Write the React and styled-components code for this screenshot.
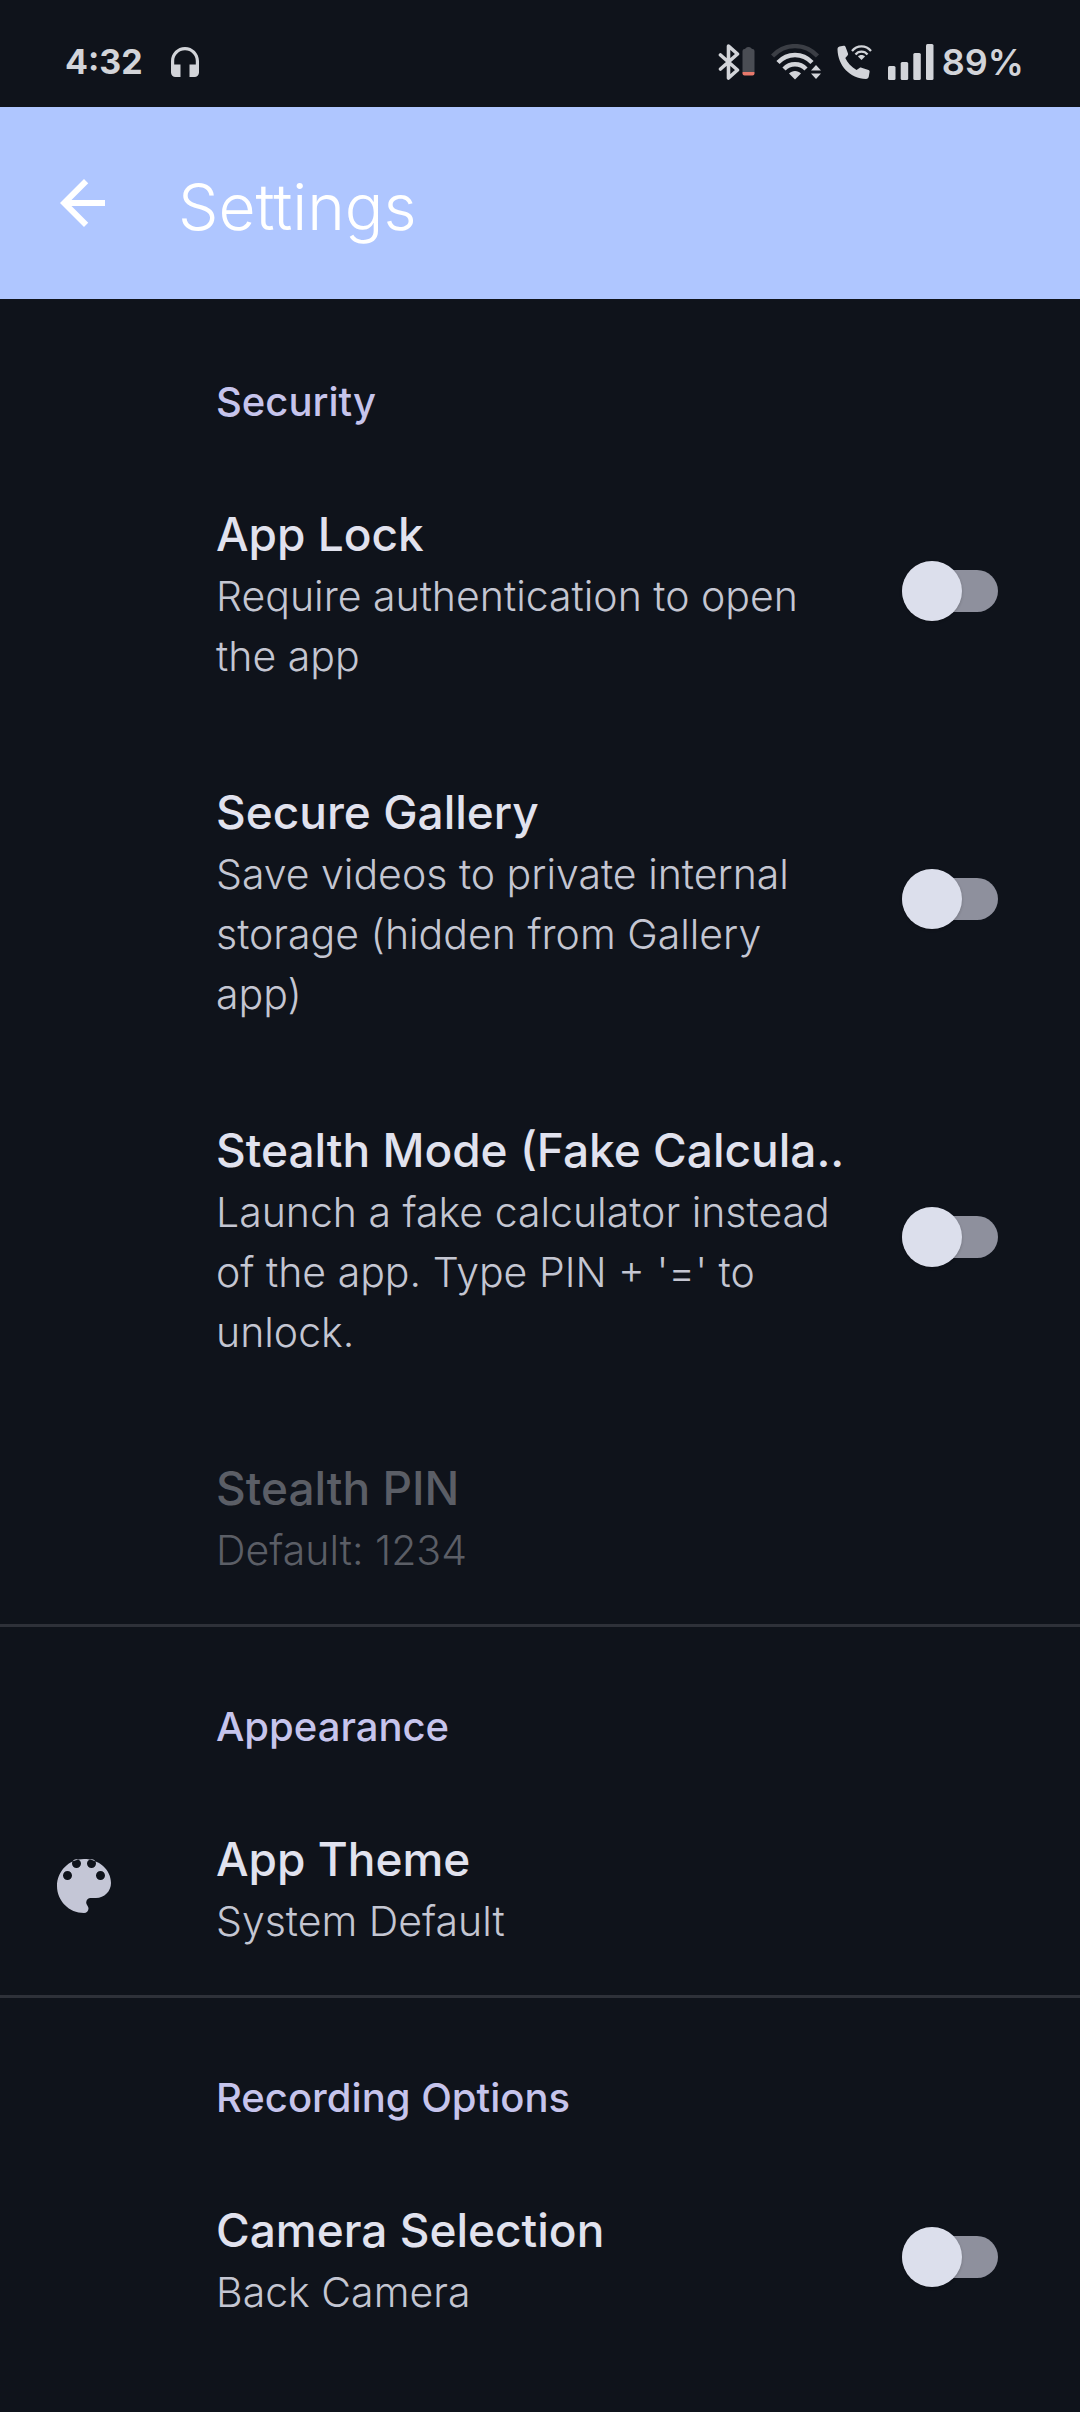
import React, { useState } from "react";
import styled, { createGlobalStyle } from "styled-components";

const GlobalStyle = createGlobalStyle`
  * { box-sizing: border-box; }
  body {
    margin: 0;
    background: #0f131b;
    font-family: Inter, Roboto, "Liberation Sans", sans-serif;
  }
`;

const Screen = styled.div`
  min-height: 100vh;
  background: #0f131b;
  color: #e1e2ee;
`;

const StatusBar = styled.div`
  display: flex;
  align-items: center;
  justify-content: space-between;
  height: 107px;
  padding: 16px 56px 0 65px;
  color: #d2d4d9;
`;

const StatusGroup = styled.div`
  display: flex;
  align-items: center;
  gap: ${(p) => p.$gap}px;
`;

const StatusText = styled.span`
  font-size: ${(p) => p.$size}px;
  line-height: 44px;
  font-weight: ${(p) => p.$weight};
`;

const StatusIcon = styled.svg`
  display: block;
  flex: none;
  fill: currentColor;
`;

const AppBar = styled.header`
  display: flex;
  align-items: center;
  gap: 58px;
  height: 192px;
  padding: 0 48px;
  background: #afc6ff;
  color: #ffffff;
`;

const BackButton = styled.button`
  display: flex;
  padding: 0;
  border: 0;
  background: none;
  color: inherit;
  cursor: pointer;
`;

const AppTitle = styled.h1`
  margin: 0;
  padding-top: 8px;
  font-size: 64px;
  line-height: 80px;
  font-weight: 350;
`;

const Category = styled.section`
  border-top: 3px solid ${(p) => (p.$divided ? "#2e3139" : "transparent")};
`;

const CategoryTitle = styled.h2`
  margin: 0;
  padding: 70px 48px 20px 216px;
  font-size: 40px;
  line-height: 60px;
  font-weight: 450;
  color: #c6c4ec;
`;

const Row = styled.div`
  display: grid;
  grid-template-columns: 168px 1fr auto;
  align-items: center;
  padding: 44px 82px 44px 48px;
  color: ${(p) => (p.$disabled ? "#5b5e66" : "#e1e2ee")};
`;

const IconSlot = styled.div`
  display: flex;
  color: #c4c6d6;
`;

const RowText = styled.div`
  min-width: 0;
  padding: 8px 48px 0 0;
`;

const RowTitle = styled.label`
  display: block;
  margin-bottom: 2px;
  font-size: 46px;
  line-height: 60px;
  font-weight: 500;
  white-space: nowrap;
  overflow: hidden;
`;

const Summary = styled.p`
  margin: 0;
  font-size: 41px;
  line-height: 60px;
  font-weight: 300;
  color: ${(p) => (p.$disabled ? "#5b5e66" : "#c4c6d2")};
`;

const Switch = styled.input`
  appearance: none;
  display: flex;
  align-items: center;
  justify-content: ${(p) => (p.checked ? "flex-end" : "flex-start")};
  width: 96px;
  height: 42px;
  margin: 0;
  border-radius: 21px;
  background: #8e909d;
  cursor: pointer;

  &::before {
    content: "";
    flex: none;
    width: 60px;
    height: 60px;
    border-radius: 50%;
    background: #dcdfec;
    box-shadow: 0 1px 3px rgba(0, 0, 0, 0.2);
  }
`;

const HeadphonesIcon = () => (
  <StatusIcon width="28" height="30" viewBox="0 0 28 30" aria-hidden="true">
    <path d="M14 0C6.300 0 0 6.300 0 14v11.500C0 28 2 30 4.500 30H9.500V17.500H3.200V14C3.200 8 8 3.200 14 3.200S24.800 8 24.800 14v3.500H18.500V30h5c2.500 0 4.500-2 4.500-4.500V14C28 6.300 21.700 0 14 0z" />
  </StatusIcon>
);

const BluetoothIcon = () => (
  <StatusIcon width="37" height="36" viewBox="0 0 37 36" aria-hidden="true">
    <path d="M2.500 11 19.500 26 10.500 34V2L19.500 10 2.500 25" fill="none" stroke="currentColor" strokeWidth="3.600" strokeLinejoin="round" strokeLinecap="round" />
    <path d="M24.500 7a2 2 0 0 1 2-2c1 0 1.500-2 4-2S33.500 5 34.500 5a2 2 0 0 1 2 2V28H24.500z" fill="#4a4d54" />
    <path d="M24.500 28h12v1.500a2 2 0 0 1-2 2h-8a2 2 0 0 1-2-2z" fill="#e8796c" />
  </StatusIcon>
);

const WifiIcon = () => (
  <StatusIcon width="50" height="36" viewBox="0 0 50 36" aria-hidden="true">
    <g fill="none" strokeWidth="4.400">
      <path d="M1.500 12C14-1.200 34-1.200 46.500 12" stroke="#3b3e45" />
      <path d="M7 18.500C16.500 8.500 31.500 8.500 41 18.500" stroke="currentColor" />
      <path d="M13 25C19 18.700 29 18.700 35 25" stroke="currentColor" />
    </g>
    <path d="M24 35.500 18 29.500C21 26 27 26 30 29.500z" />
    <path d="M45 21 50 26.500H40zM45 35 40 29.500H50z" />
  </StatusIcon>
);

const WifiCallIcon = () => (
  <StatusIcon width="35" height="34" viewBox="0 0 35 34" aria-hidden="true">
    <path d="M2.500 1.500 6.500.7C7.500.5 8.200 1 8.500 1.800L11 8.500C11.300 9.300 11 10 10.500 10.500L8.300 13C10.500 18 14.500 22 19.500 25L22.500 23C23 22.500 23.800 22.400 24.500 22.700L31.500 25C32.300 25.300 32.700 26 32.600 26.800L31.800 31.500C31.500 33 30.500 34 29 34C13 33.500 1 21 .5 4.500C.4 3 1.200 1.800 2.500 1.500z" />
    <g fill="none" stroke="currentColor" strokeWidth="2.200">
      <path d="M15 6C20-.2 29-.2 34 6" />
      <path d="M18.500 9.500C21.500 5.600 27.500 5.600 30.500 9.500" />
    </g>
    <path d="M24.500 15 21 11.500C22.500 9.500 26.500 9.500 28 11.500z" />
  </StatusIcon>
);

const SignalIcon = () => (
  <StatusIcon width="46" height="36" viewBox="0 0 46 36" aria-hidden="true">
    <rect x="0" y="22" width="7.500" height="14" rx="1.500" />
    <rect x="12.700" y="18" width="7.500" height="18" rx="1.500" />
    <rect x="25.300" y="9" width="7.500" height="27" rx="1.500" />
    <rect x="38" y="0" width="7.500" height="36" rx="1.500" />
  </StatusIcon>
);

const ArrowIcon = () => (
  <svg width="72" height="72" viewBox="0 0 24 24" fill="currentColor" aria-hidden="true">
    <path d="M19 11H7.830l5.590-5.590L12 4l-8 8 8 8 1.410-1.410L7.830 13H19z" />
  </svg>
);

const PaletteIcon = () => (
  <svg width="72" height="72" viewBox="0 0 24 24" fill="currentColor" aria-hidden="true">
    <path
      fillRule="evenodd"
      d="M12 3c-4.970 0-9 4.030-9 9s4.030 9 9 9c.83 0 1.500-.67 1.500-1.500 0-.39-.15-.74-.39-1.010-.23-.26-.38-.61-.38-.99 0-.83.67-1.500 1.500-1.500H16c2.760 0 5-2.240 5-5 0-4.420-4.030-8-9-8zm-5.500 7C5.670 10 5 9.330 5 8.500S5.670 7 6.500 7 8 7.670 8 8.500 7.330 10 6.500 10zm3-4C8.670 6 8 5.330 8 4.500S8.670 3.100 9.500 3.100 11 3.670 11 4.500 10.330 6 9.500 6zm5 0C13.670 6 13 5.330 13 4.500s.67-1.400 1.500-1.400S16 3.670 16 4.500 15.330 6 14.500 6zm3 4c-.83 0-1.500-.67-1.500-1.500S16.670 7 17.500 7 19 7.670 19 8.500 18.330 10 17.500 10z"
    />
  </svg>
);

function SwitchRow({ id, title, summary }) {
  const [on, setOn] = useState(false);
  return (
    <Row>
      <IconSlot />
      <RowText>
        <RowTitle htmlFor={id}>{title}</RowTitle>
        <Summary>{summary}</Summary>
      </RowText>
      <Switch id={id} type="checkbox" role="switch" checked={on} onChange={() => setOn(!on)} />
    </Row>
  );
}

function TextRow({ icon, title, summary, disabled }) {
  return (
    <Row $disabled={disabled}>
      <IconSlot>{icon}</IconSlot>
      <RowText>
        <RowTitle as="div">{title}</RowTitle>
        <Summary $disabled={disabled}>{summary}</Summary>
      </RowText>
    </Row>
  );
}

export default function App() {
  return (
    <Screen>
      <GlobalStyle />
      <StatusBar>
        <StatusGroup $gap={28}>
          <StatusText $size={34} $weight={700}>4:32</StatusText>
          <HeadphonesIcon />
        </StatusGroup>
        <StatusGroup $gap={16}>
          <BluetoothIcon />
          <WifiIcon />
          <WifiCallIcon />
          <StatusGroup $gap={8}>
            <SignalIcon />
            <StatusText $size={36} $weight={600}>89%</StatusText>
          </StatusGroup>
        </StatusGroup>
      </StatusBar>
      <AppBar>
        <BackButton type="button" aria-label="Back">
          <ArrowIcon />
        </BackButton>
        <AppTitle>Settings</AppTitle>
      </AppBar>
      <main>
        <Category>
          <CategoryTitle>Security</CategoryTitle>
          <SwitchRow id="app-lock" title="App Lock" summary="Require authentication to open the app" />
          <SwitchRow
            id="secure-gallery"
            title="Secure Gallery"
            summary="Save videos to private internal storage (hidden from Gallery app)"
          />
          <SwitchRow
            id="stealth-mode"
            title="Stealth Mode (Fake Calcula.."
            summary="Launch a fake calculator instead of the app. Type PIN + '=' to unlock."
          />
          <TextRow title="Stealth PIN" summary="Default: 1234" disabled />
        </Category>
        <Category $divided>
          <CategoryTitle>Appearance</CategoryTitle>
          <TextRow icon={<PaletteIcon />} title="App Theme" summary="System Default" />
        </Category>
        <Category $divided>
          <CategoryTitle>Recording Options</CategoryTitle>
          <SwitchRow id="camera-selection" title="Camera Selection" summary="Back Camera" />
        </Category>
      </main>
    </Screen>
  );
}
